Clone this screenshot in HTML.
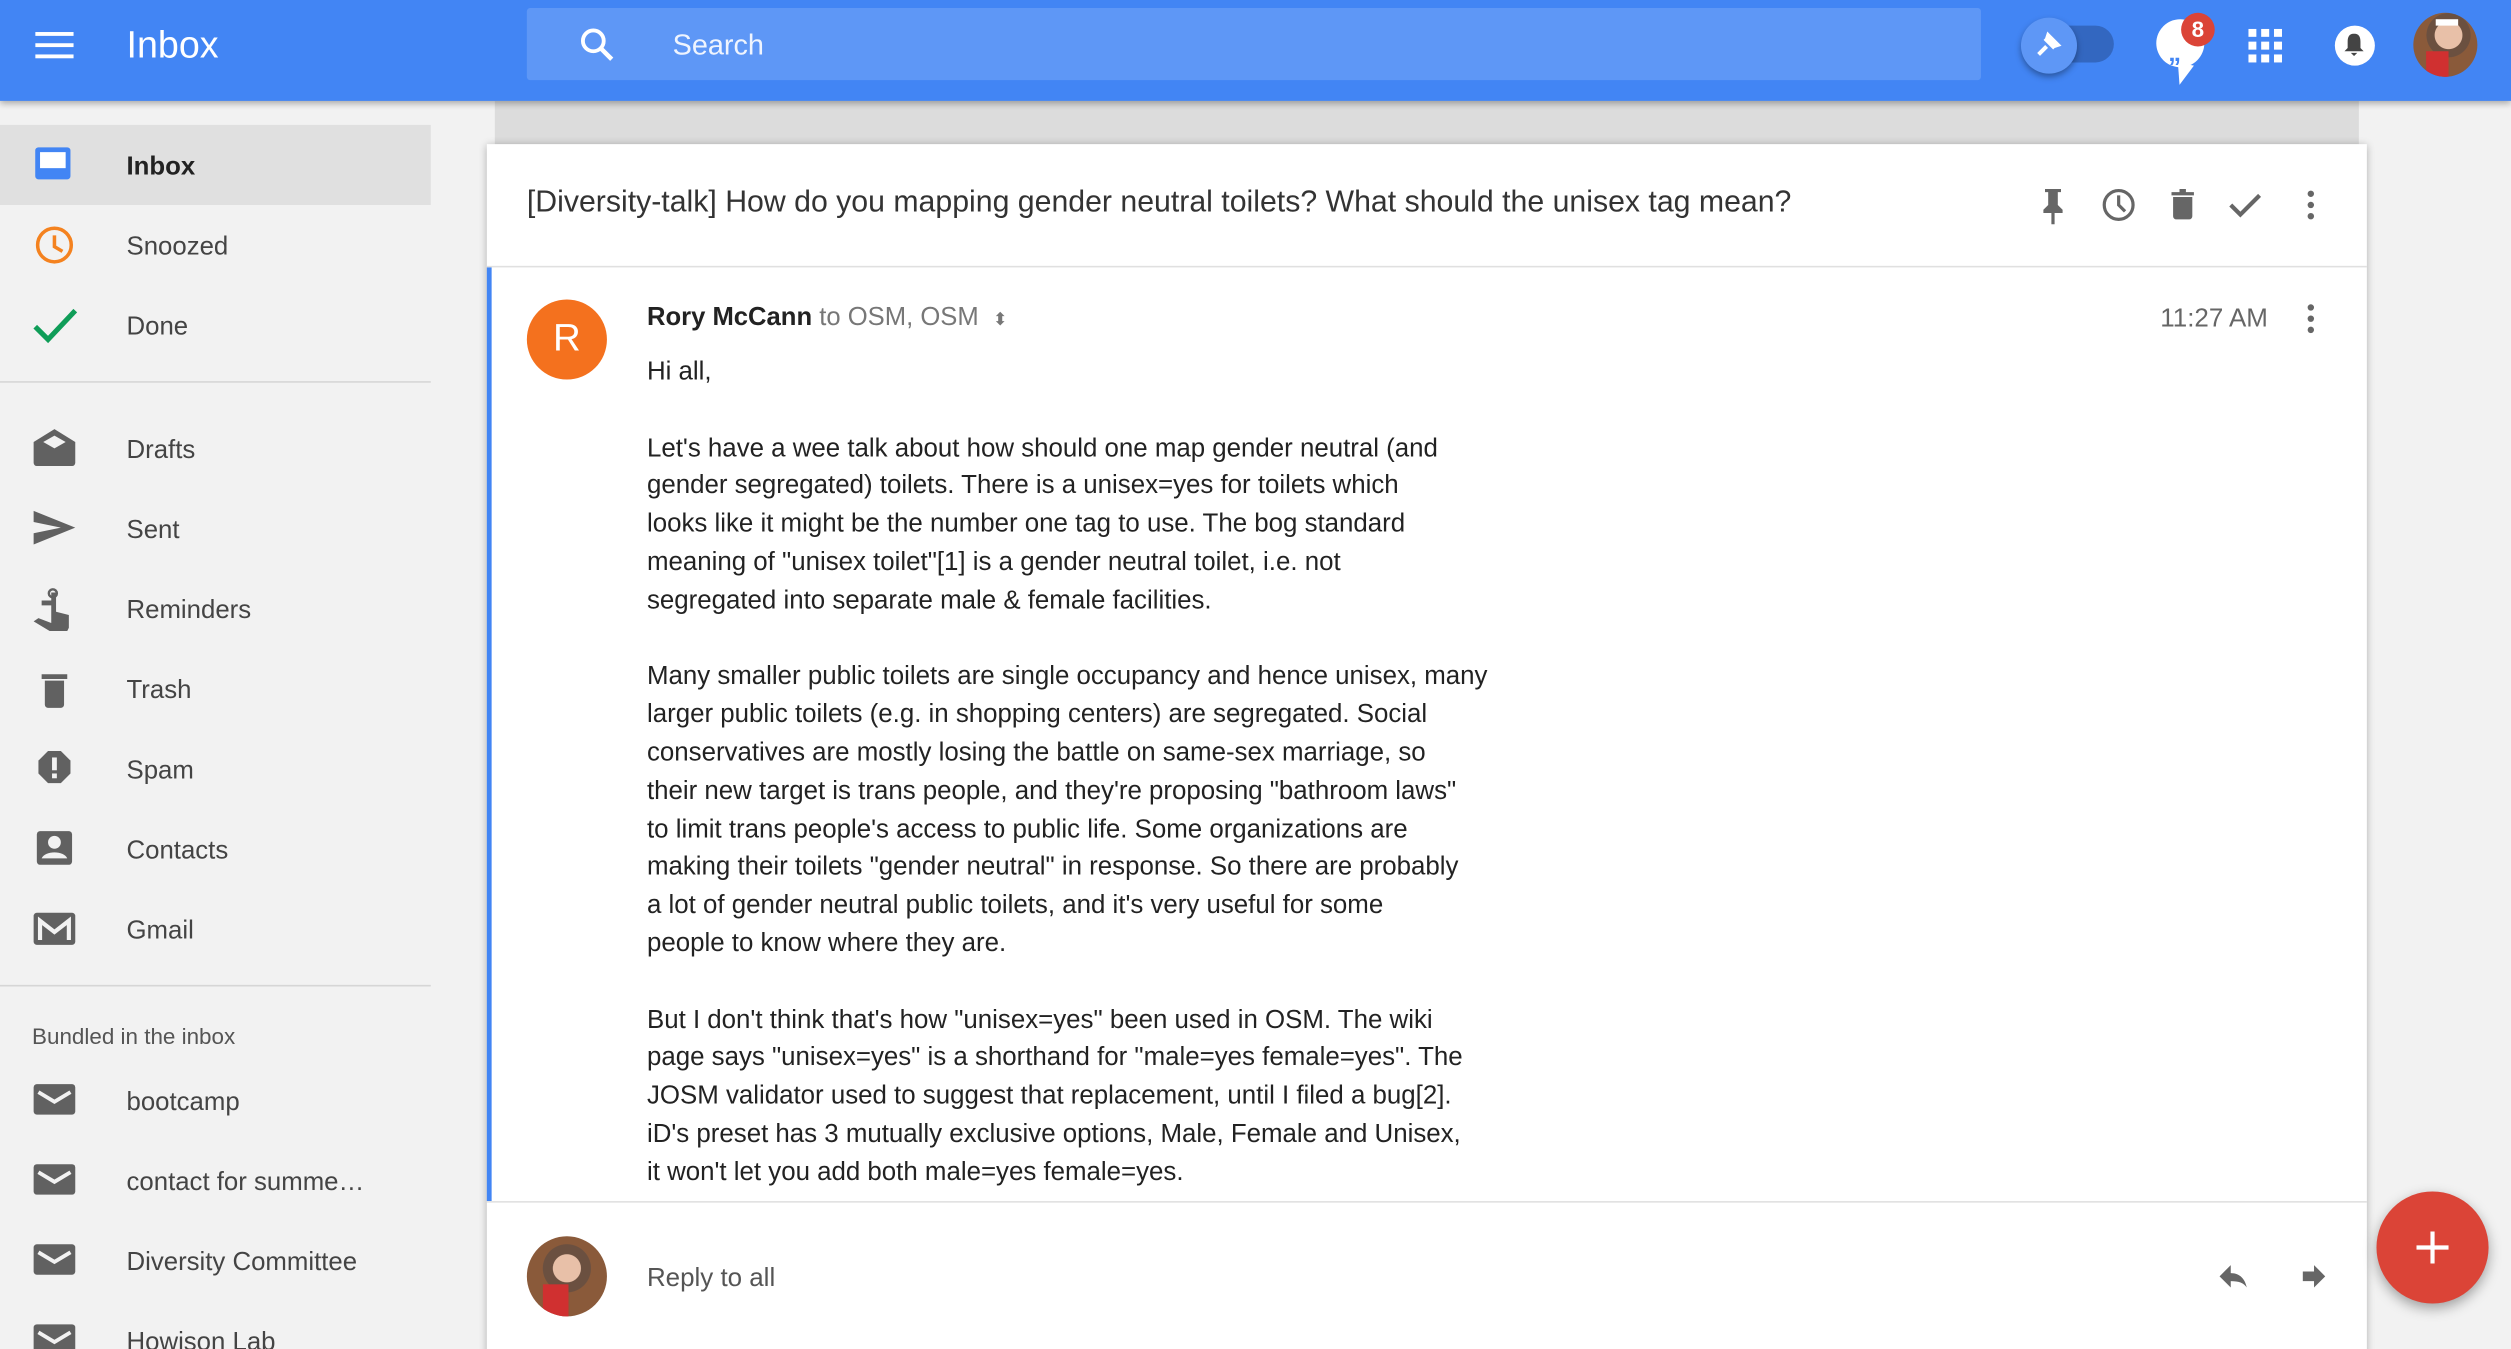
<!DOCTYPE html>
<html><head><meta charset="utf-8"><style>
html,body{margin:0;padding:0;width:2511px;height:1349px;overflow:hidden;background:#f2f2f2}
#w{width:1568px;height:843px;transform:scale(1.60140);transform-origin:0 0;position:relative;font-family:"Liberation Sans",Arial,sans-serif;color:#212121;background:#f2f2f2}
.abs{position:absolute}
#hdr{left:0;top:0;width:1568px;height:63px;background:#4285f4;box-shadow:0 2px 4px rgba(0,0,0,.3);z-index:3}
.nav{position:absolute;left:0;width:269px;height:50px;font-size:16.1px;color:#444}
.nav span{position:absolute;left:79px;top:17px}
.nav svg{position:absolute;left:20px;top:12px}
</style></head><body><div id="w">
<div id="hdr" class="abs">
 <svg class="abs" style="left:22px;top:19px" width="24" height="18"><rect y="1" width="24" height="2.4" fill="#fff"/><rect y="8" width="24" height="2.4" fill="#fff"/><rect y="15" width="24" height="2.4" fill="#fff"/></svg>
 <div class="abs" style="left:79px;top:15px;color:#fff;font-size:23.5px">Inbox</div>
 <div class="abs" style="left:329px;top:5px;width:908px;height:45px;background:#5e97f6;border-radius:2px"></div>
 <svg class="abs" style="left:361px;top:16px" width="24" height="24" viewBox="0 0 24 24"><circle cx="9.5" cy="9.5" r="6.5" fill="none" stroke="#fff" stroke-width="2.4"/><path d="M14 14l7 7" stroke="#fff" stroke-width="2.8"/></svg>
 <div class="abs" style="left:420px;top:18px;color:#fff;font-size:18px;opacity:.9">Search</div>
 <div class="abs" style="left:1276px;top:16px;width:44px;height:23px;border-radius:12px;background:#3367c0"></div>
 <div class="abs" style="left:1262px;top:11px;width:35px;height:35px;border-radius:50%;background:#5e97f6;box-shadow:0 2px 4px rgba(0,0,0,.35)"></div>
 <svg class="abs" style="left:1270px;top:19px" width="18" height="18" viewBox="0 0 18 18"><path d="M3 15l5-5M7 5l6 6M9 3l6 6-3 1-4-4z" stroke="#fff" stroke-width="2.5" fill="#fff"/></svg>
 <svg class="abs" style="left:1346px;top:11px" width="36" height="58"><circle cx="15.5" cy="16" r="15" fill="#fff"/><path d="M14 28l1 14 9-12z" fill="#fff"/><text x="8" y="27" font-size="16" font-weight="bold" fill="#4285f4" font-family="Liberation Sans">„</text></svg>
 <div class="abs" style="left:1362px;top:8px;width:21px;height:21px;border-radius:50%;background:#db4437;color:#fff;font-size:14px;font-weight:bold;text-align:center;line-height:21px">8</div>
 <svg class="abs" style="left:1404px;top:18px" width="21" height="21"><g fill="#fff"><rect x="0" y="0" width="5" height="5"/><rect x="8" y="0" width="5" height="5"/><rect x="16" y="0" width="5" height="5"/><rect x="0" y="8" width="5" height="5"/><rect x="8" y="8" width="5" height="5"/><rect x="16" y="8" width="5" height="5"/><rect x="0" y="16" width="5" height="5"/><rect x="8" y="16" width="5" height="5"/><rect x="16" y="16" width="5" height="5"/></g></svg>
 <div class="abs" style="left:1458px;top:16px;width:25px;height:25px;border-radius:50%;background:#fff"></div>
 <svg class="abs" style="left:1464px;top:21px" width="12" height="14"><path d="M6 0c3 0 4 2 4 5v4l2 2H0l2-2V5c0-3 1-5 4-5zM4 12h4l-2 2z" fill="#444"/></svg>
 <div class="abs" style="left:1507px;top:8px;width:40px;height:40px;border-radius:50%;background:radial-gradient(circle at 55% 35%,#e8c0a8 0 25%,#6b5040 26% 40%,#8a5a3a 41%);overflow:hidden"><div style="position:absolute;left:8px;top:24px;width:14px;height:20px;background:#d03030"></div><div style="position:absolute;left:14px;top:4px;width:14px;height:4px;background:#fff"></div></div>
</div>

<div class="nav" style="top:78px;background:#e0e0e0"><svg width="28" height="26" viewBox="0 0 28 26"><rect x="2" y="2" width="22" height="20" rx="2" fill="#4285f4"/><rect x="5" y="5" width="16" height="10" fill="#fff"/></svg><span style="color:#222;font-weight:bold">Inbox</span></div>
<div class="nav" style="top:128px"><svg width="28" height="28" viewBox="0 0 28 28"><circle cx="14" cy="13" r="10.5" fill="none" stroke="#f4821f" stroke-width="2.2"/><path d="M14 7v7l5 3" fill="none" stroke="#f4821f" stroke-width="2.2"/></svg><span>Snoozed</span></div>
<div class="nav" style="top:178px"><svg width="30" height="28" viewBox="0 0 30 28"><path d="M2 14l8 8L27 4" fill="none" stroke="#0f9d58" stroke-width="3.2"/></svg><span>Done</span></div>
<div class="abs" style="left:0;top:238px;width:269px;height:1px;background:#d6d6d6"></div>
<div class="nav" style="top:255px"><svg width="28" height="26" viewBox="0 0 28 26"><path d="M1 9L14 1l13 8v13a2 2 0 0 1-2 2H3a2 2 0 0 1-2-2zM7 9l7 4 7-4-7-4z" fill="#616161" fill-rule="evenodd"/></svg><span>Drafts</span></div>
<div class="nav" style="top:305px"><svg width="28" height="26" viewBox="0 0 28 26"><path d="M1 2l26 10.5L1 23l0-7 17-3.5L1 9z" fill="#616161"/></svg><span>Sent</span></div>
<div class="nav" style="top:355px"><svg width="28" height="30" viewBox="0 0 28 30"><circle cx="13" cy="3.5" r="2.5" fill="none" stroke="#616161" stroke-width="1.5"/><path d="M6 8h6V3h3v12l8 2v8l-1 2H11L1 21l3-2 8 3V11H6z" fill="#616161"/></svg><span>Reminders</span></div>
<div class="nav" style="top:405px"><svg width="28" height="28" viewBox="0 0 28 28"><path d="M6 4h16v3H6zM8 8h12v15a2 2 0 0 1-2 2h-8a2 2 0 0 1-2-2z" fill="#616161"/></svg><span>Trash</span></div>
<div class="nav" style="top:455px"><svg width="28" height="28" viewBox="0 0 28 28"><path d="M10 2h8l6 6v8l-6 6h-8l-6-6V8z" fill="#616161"/><rect x="12.5" y="6" width="3" height="8" fill="#f2f2f2"/><rect x="12.5" y="16" width="3" height="3" fill="#f2f2f2"/></svg><span>Spam</span></div>
<div class="nav" style="top:505px"><svg width="28" height="28" viewBox="0 0 28 28"><rect x="3" y="2" width="22" height="21" rx="2" fill="#616161"/><circle cx="14" cy="9" r="4" fill="#f2f2f2"/><path d="M6 19c2-5 14-5 16 0z" fill="#f2f2f2"/></svg><span>Contacts</span></div>
<div class="nav" style="top:555px"><svg width="28" height="28" viewBox="0 0 28 28"><rect x="1" y="3" width="26" height="20" rx="2" fill="#616161"/><path d="M5 20V8l9 7 9-7v12" fill="none" stroke="#f2f2f2" stroke-width="2.6"/></svg><span>Gmail</span></div>
<div class="abs" style="left:0;top:615px;width:269px;height:1px;background:#d6d6d6"></div>
<div class="abs" style="left:20px;top:639px;font-size:14px;color:#555">Bundled in the inbox</div>
<div class="nav" style="top:662px"><svg width="28" height="26" viewBox="0 0 28 26"><rect x="1" y="3" width="26" height="19" rx="2" fill="#616161"/><path d="M4 8l10 6 10-6" fill="none" stroke="#f2f2f2" stroke-width="2.4"/></svg><span>bootcamp</span></div>
<div class="nav" style="top:712px"><svg width="28" height="26" viewBox="0 0 28 26"><rect x="1" y="3" width="26" height="19" rx="2" fill="#616161"/><path d="M4 8l10 6 10-6" fill="none" stroke="#f2f2f2" stroke-width="2.4"/></svg><span>contact for summe…</span></div>
<div class="nav" style="top:762px"><svg width="28" height="26" viewBox="0 0 28 26"><rect x="1" y="3" width="26" height="19" rx="2" fill="#616161"/><path d="M4 8l10 6 10-6" fill="none" stroke="#f2f2f2" stroke-width="2.4"/></svg><span>Diversity Committee</span></div>
<div class="nav" style="top:812px"><svg width="28" height="26" viewBox="0 0 28 26"><rect x="1" y="3" width="26" height="19" rx="2" fill="#616161"/><path d="M4 8l10 6 10-6" fill="none" stroke="#f2f2f2" stroke-width="2.4"/></svg><span>Howison Lab</span></div>

<div class="abs" style="left:309px;top:63px;width:1164px;height:30px;background:#dcdcdc"></div>
<div class="abs" style="left:304px;top:90px;width:1174px;height:760px;background:#fff;box-shadow:0 1px 5px rgba(0,0,0,.3)"></div>
<div class="abs" style="left:329px;top:116px;font-size:18.9px;color:#333">[Diversity-talk] How do you mapping gender neutral toilets? What should the unisex tag mean?</div>
<svg class="abs" style="left:1270px;top:115px" width="190" height="28" viewBox="0 0 190 28"><g fill="#666"><path d="M7 3h10v2h-2v8l3 3v2h-5v7h-2v-7H6v-2l3-3V5H7z"/><circle cx="53" cy="13" r="9" fill="none" stroke="#666" stroke-width="2"/><path d="M53 7v6l4 4" fill="none" stroke="#666" stroke-width="2"/><path d="M86 5h14v2H86zM91 3h4v2h-4zM87 8h12v12a2 2 0 0 1-2 2h-8a2 2 0 0 1-2-2z"/><path d="M123 13l6 6 12-12" fill="none" stroke="#666" stroke-width="2.6"/><circle cx="173" cy="6" r="2"/><circle cx="173" cy="13" r="2"/><circle cx="173" cy="20" r="2"/></g></svg>
<div class="abs" style="left:304px;top:166px;width:1174px;height:1px;background:#e0e0e0"></div>
<div class="abs" style="left:304px;top:167px;width:3px;height:583px;background:#4285f4"></div>
<div class="abs" style="left:329px;top:187px;width:50px;height:50px;border-radius:50%;background:#f4711e;color:#fff;font-size:24px;text-align:center;line-height:50px">R</div>
<div class="abs" style="left:404px;top:190px;font-size:16px;color:#777"><b style="color:#222">Rory McCann</b> to OSM, OSM &nbsp;<span style="font-size:11px">⬍</span></div>
<div class="abs" style="left:1349px;top:190px;font-size:16.2px;color:#666">11:27 AM</div>
<svg class="abs" style="left:1437px;top:188px" width="12" height="22"><g fill="#666"><circle cx="6" cy="4" r="2"/><circle cx="6" cy="11" r="2"/><circle cx="6" cy="18" r="2"/></g></svg>
<div class="abs" style="left:404px;top:221px;font-size:16.15px;line-height:23.8px;color:#222;white-space:pre">Hi all,

Let's have a wee talk about how should one map gender neutral (and
gender segregated) toilets. There is a unisex=yes for toilets which
looks like it might be the number one tag to use. The bog standard
meaning of "unisex toilet"[1] is a gender neutral toilet, i.e. not
segregated into separate male &amp; female facilities.

Many smaller public toilets are single occupancy and hence unisex, many
larger public toilets (e.g. in shopping centers) are segregated. Social
conservatives are mostly losing the battle on same-sex marriage, so
their new target is trans people, and they're proposing "bathroom laws"
to limit trans people's access to public life. Some organizations are
making their toilets "gender neutral" in response. So there are probably
a lot of gender neutral public toilets, and it's very useful for some
people to know where they are.

But I don't think that's how "unisex=yes" been used in OSM. The wiki
page says "unisex=yes" is a shorthand for "male=yes female=yes". The
JOSM validator used to suggest that replacement, until I filed a bug[2].
iD's preset has 3 mutually exclusive options, Male, Female and Unisex,
it won't let you add both male=yes female=yes.</div>
<div class="abs" style="left:304px;top:750px;width:1174px;height:1px;background:#e0e0e0"></div>
<div class="abs" style="left:329px;top:772px;width:50px;height:50px;border-radius:50%;background:radial-gradient(circle at 50% 40%,#e8c0a8 0 22%,#6b5040 23% 38%,#8a5a3a 39%);overflow:hidden"><div style="position:absolute;left:10px;top:30px;width:16px;height:22px;background:#d03030"></div></div>
<div class="abs" style="left:404px;top:789px;font-size:16.2px;color:#555">Reply to all</div>
<svg class="abs" style="left:1384px;top:786px" width="80" height="22" viewBox="0 0 80 22"><path d="M9 4L2 11l7 7v-4c5 0 8 1 10 4-1-5-4-9-10-9z" fill="#666"/><path d="M54 8h7V4l7 7-7 7v-4h-7z" fill="#666"/></svg>
<div class="abs" style="left:1484px;top:744px;width:70px;height:70px;border-radius:50%;background:#db4437;box-shadow:0 3px 8px rgba(0,0,0,.35)"></div>
<svg class="abs" style="left:1507px;top:767px" width="24" height="24"><path d="M12 2v20M2 12h20" stroke="#fff" stroke-width="2.6"/></svg>
</div></body></html>
